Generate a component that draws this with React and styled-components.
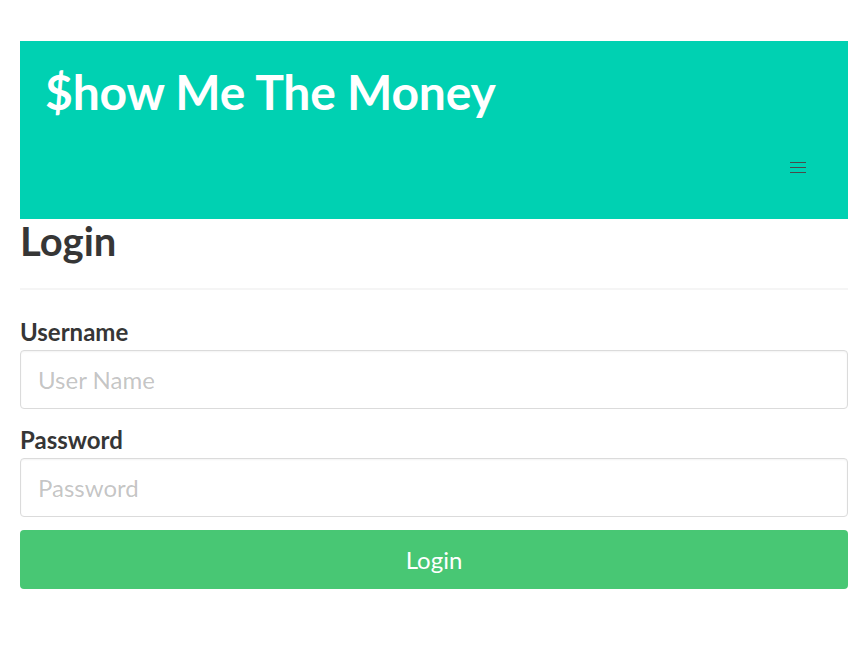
import styled, { createGlobalStyle } from 'styled-components';

const GlobalStyle = createGlobalStyle`
  html, body {
    margin: 0;
    padding: 0;
    background: #fff;
  }
  body {
    font-family: Lato, "Open Sans", sans-serif;
    color: #363636;
  }
  * {
    box-sizing: border-box;
  }
`;

const App = () => {
  return (
    <>
      <GlobalStyle />
      <Page>
        <Header>
          <Brand>$how Me The Money</Brand>
          <NavRow>
            <Burger aria-label="menu">
              <span />
              <span />
              <span />
            </Burger>
          </NavRow>
        </Header>

        <Title>Login</Title>
        <Divider />

        <Form onSubmit={(e) => e.preventDefault()}>
          <Field>
            <Label htmlFor="username">Username</Label>
            <Input id="username" type="text" placeholder="User Name" />
          </Field>
          <Field>
            <Label htmlFor="password">Password</Label>
            <Input id="password" type="password" placeholder="Password" />
          </Field>
          <SubmitButton type="submit">Login</SubmitButton>
        </Form>
      </Page>
    </>
  );
};

const Page = styled.div`
  padding: 41px 14px 0 20px;
`;

const Header = styled.header`
  background-color: #00d1b2;
  padding: 24px 24px 25px 25px;
  display: flex;
  flex-direction: column;
`;

const Brand = styled.h1`
  margin: 0;
  color: #fff;
  font-size: 48px;
  font-weight: 700;
  line-height: 54px;
  letter-spacing: -0.2px;
`;

const NavRow = styled.nav`
  display: flex;
  justify-content: flex-end;
  margin-top: 23px;
`;

const Burger = styled.a`
  position: relative;
  display: block;
  width: 52px;
  height: 52px;
  cursor: pointer;

  span {
    position: absolute;
    left: calc(50% - 8px);
    width: 16px;
    height: 1px;
    background-color: #4a4a4a;
  }
  span:nth-child(1) {
    top: calc(50% - 6px);
  }
  span:nth-child(2) {
    top: calc(50% - 1px);
  }
  span:nth-child(3) {
    top: calc(50% + 4px);
  }
`;

const Title = styled.h2`
  margin: 0;
  font-size: 40px;
  font-weight: 700;
  line-height: 1.125;
  color: #363636;
`;

const Divider = styled.hr`
  border: none;
  height: 2px;
  background-color: #f5f5f5;
  margin: 24px 0;
`;

const Form = styled.form`
  display: flex;
  flex-direction: column;
`;

const Field = styled.div`
  display: flex;
  flex-direction: column;
  margin-bottom: 13px;
`;

const Label = styled.label`
  font-size: 24px;
  font-weight: 700;
  line-height: 36px;
  color: #363636;
`;

const Input = styled.input`
  height: 59px;
  width: 100%;
  padding: 0 17px;
  font-family: Lato, "Open Sans", sans-serif;
  font-size: 24px;
  color: #363636;
  background: #fff;
  border: 1px solid #dbdbdb;
  border-radius: 4px;
  box-shadow: inset 0 1px 2px rgba(10, 10, 10, 0.05);
  outline: none;

  &::placeholder {
    color: rgba(54, 54, 54, 0.3);
  }
`;

const SubmitButton = styled.button`
  height: 59px;
  width: 100%;
  border: none;
  border-radius: 4px;
  background-color: #48c774;
  color: #fff;
  font-family: Lato, "Open Sans", sans-serif;
  font-size: 24px;
  cursor: pointer;
`;

export default App;
